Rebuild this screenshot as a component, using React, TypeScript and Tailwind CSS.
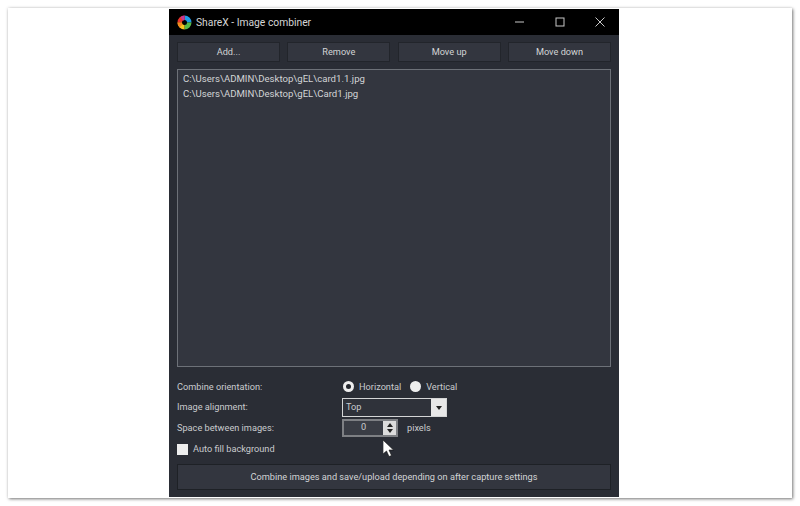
import React from "react";

const font = { fontFamily: 'Roboto, "Liberation Sans", sans-serif' };

function TopButton({ label }: { label: string }) {
  return (
    <button className="flex h-[20px] w-[103px] items-center justify-center border border-[#22252b] bg-[#33363f] text-[9.2px] text-[#d2d4d6]">
      {label}
    </button>
  );
}

function Logo() {
  return (
    <svg width="15" height="15" viewBox="0 0 30 30">
      <path d="M15 1a14 14 0 0 1 14 14h-9a5 5 0 0 0-5-5z" fill="#1f9be8" />
      <path d="M29 15a14 14 0 0 1-14 14v-9a5 5 0 0 0 5-5z" fill="#55b948" />
      <path d="M15 29A14 14 0 0 1 1 15h9a5 5 0 0 0 5 5z" fill="#f7c51e" />
      <path d="M1 15A14 14 0 0 1 15 1v9a5 5 0 0 0-5 5z" fill="#e8342e" />
      <path d="M15 1a14 14 0 0 0-8 3l5 7a5 5 0 0 1 3-1z" fill="#c2379a" />
      <path d="M1 15a14 14 0 0 0 4 10l6-6a5 5 0 0 1-1-4z" fill="#f58a1f" />
    </svg>
  );
}

function Radio({ checked, label }: { checked?: boolean; label: string }) {
  return (
    <div className="flex items-center gap-[5px]">
      <span className="flex h-[11px] w-[11px] items-center justify-center rounded-full bg-[#eeeeee]">
        {checked && <span className="h-[5px] w-[5px] rounded-full bg-[#24272e]" />}
      </span>
      <span>{label}</span>
    </div>
  );
}

export default function App() {
  return (
    <div className="h-[506px] w-[800px] overflow-hidden bg-white" style={font}>
      <div className="ml-[8px] mt-[8px] h-[490px] w-[784px] bg-white pl-[161px] pt-px shadow-[1px_1px_3px_0px_rgba(0,0,0,0.55),-1px_-1px_3px_rgba(0,0,0,0.04)]">
        <div className="relative flex h-[488px] w-[450px] flex-col bg-[#2a2d35] text-[9.2px] text-[#c9cbce]">
          <div className="flex h-[26px] items-center bg-black pl-[8px] text-[10.3px] text-[#d6d6d6]">
            <Logo />
            <span className="ml-[4px] pt-px">ShareX - Image combiner</span>
            <div className="ml-auto flex items-center text-[#c8c8c8]">
              <svg width="10" height="10" viewBox="0 0 10 10" className="mr-[30px]">
                <path d="M0 5h9" stroke="currentColor" strokeWidth="1" />
              </svg>
              <svg width="10" height="10" viewBox="0 0 10 10" className="mr-[30px]">
                <rect x="1" y="1" width="8" height="8" fill="none" stroke="currentColor" strokeWidth="1" />
              </svg>
              <svg width="10" height="10" viewBox="0 0 10 10" className="mr-[14px]">
                <path d="M.5.5l9 9M9.5.5l-9 9" stroke="currentColor" strokeWidth="1" />
              </svg>
            </div>
          </div>

          <div className="flex flex-1 flex-col px-[8px] pt-[7px]">
            <div className="flex justify-between">
              <TopButton label="Add..." />
              <TopButton label="Remove" />
              <TopButton label="Move up" />
              <TopButton label="Move down" />
            </div>

            <div className="mt-[7px] h-[298px] border border-[#6d7178] bg-[#33363f] px-[5px] pt-px text-[9.6px] leading-[15px] text-[#d2d4d6]">
              <div>C:\Users\ADMIN\Desktop\gEL\card1.1.jpg</div>
              <div>C:\Users\ADMIN\Desktop\gEL\Card1.jpg</div>
            </div>

            <div className="mt-[12px] flex h-[16px] items-center">
              <span className="w-[166px]">Combine orientation:</span>
              <Radio checked label="Horizontal" />
              <div className="ml-[9px]">
                <Radio label="Vertical" />
              </div>
            </div>

            <div className="mt-[3px] flex h-[19px] items-center">
              <span className="w-[165px] pb-px">Image alignment:</span>
              <div className="flex h-[19px] w-[105px] border border-[#d4d5d6] bg-[#2f323a]">
                <span className="flex-1 pl-[3px] leading-[16px]">Top</span>
                <span className="flex w-[15px] items-center justify-center bg-[#e8e8e8]">
                  <svg width="6" height="4" viewBox="0 0 6 4">
                    <path d="M0 0h6L3 4z" fill="#222" />
                  </svg>
                </span>
              </div>
            </div>

            <div className="mt-px flex h-[19px] items-center">
              <span className="w-[165px]">Space between images:</span>
              <div className="flex h-[18px] w-[56px] border-2 border-[#7e8084] bg-[#3a3d45]">
                <span className="flex-1 text-center leading-[12px]">0</span>
                <span className="flex w-[13px] flex-col items-center justify-center gap-[2px] bg-[#dcdcdc]">
                  <svg width="6" height="4" viewBox="0 0 6 4">
                    <path d="M0 4h6L3 0z" fill="#222" />
                  </svg>
                  <svg width="6" height="4" viewBox="0 0 6 4">
                    <path d="M0 0h6L3 4z" fill="#222" />
                  </svg>
                </span>
              </div>
              <span className="ml-[9px]">pixels</span>
            </div>

            <div className="mt-[3px] flex h-[18px] items-center">
              <span className="h-[11px] w-[11px] bg-[#eeeeee]" />
              <span className="ml-[5px]">Auto fill background</span>
            </div>

            <button className="mt-[6px] flex h-[26px] w-full items-center justify-center border border-[#1e2126] bg-[#33363f] text-[9.2px] text-[#d2d4d6]">
              Combine images and save/upload depending on after capture settings
            </button>
          </div>

          <svg
            width="11"
            height="17"
            viewBox="0 0 11 17"
            className="absolute left-[214px] top-[431px]"
          >
            <path d="M0 0v14l3.500-3 2.500 5.500 2.500-1-2.500-5.500H10.500z" fill="#fff" stroke="#111" strokeWidth=".6" />
          </svg>
        </div>
      </div>
    </div>
  );
}
